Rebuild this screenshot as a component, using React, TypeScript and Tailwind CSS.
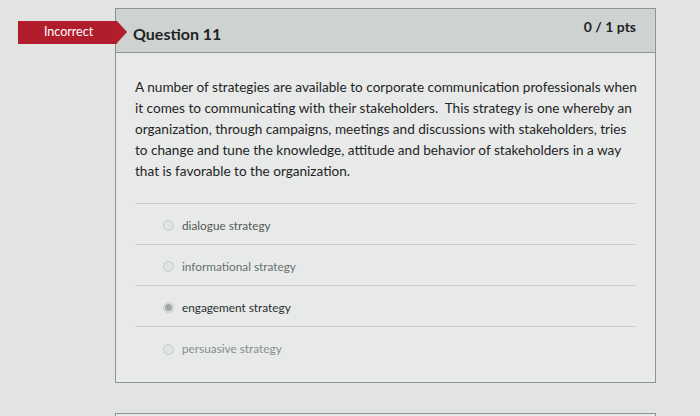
const options = [
  { label: 'dialogue strategy', color: 'text-[#535a59]', selected: false },
  { label: 'informational strategy', color: 'text-[#687070]', selected: false },
  { label: 'engagement strategy', color: 'text-[#2a3030]', selected: true },
  { label: 'persuasive strategy', color: 'text-[#878d8d]', selected: false },
];

const Radio = ({ selected }: { selected: boolean }) => (
  <div className="w-[11px] h-[11px] rounded-full border border-[#c6cac9] bg-[#e1e4e3] flex items-center justify-center shrink-0">
    {selected && <div className="w-[7px] h-[7px] rounded-full bg-[#a2a7a6]"></div>}
  </div>
);

export default function App() {
  return (
    <div
      className="relative w-[700px] h-[416px] overflow-hidden bg-[#e2e4e2] pt-[8px]"
      style={{ fontFamily: 'Lato, "Open Sans", sans-serif' }}
    >
      {/* incorrect badge */}
      <div className="absolute left-[18px] top-[21px] z-10 flex items-stretch h-[23px]">
        <div className="w-[99px] bg-[#b21d2b] flex items-center justify-center text-white text-[12.5px] pl-[2px]">
          Incorrect
        </div>
        <div className="w-0 h-0 border-y-[11.5px] border-y-transparent border-l-[10px] border-l-[#b21d2b]"></div>
      </div>

      <div className="ml-[115px] w-[541px] border border-[#8f9493] bg-[#e8eae9]">
        <div className="h-[44px] bg-[#ced2d1] border-b border-[#8f9493] flex justify-between pl-[17px] pr-[19px]">
          <div className="self-end pb-[6px] text-[16px] font-bold text-[#1f2424]">Question 11</div>
          <div className="self-start pt-[7px] text-[14px] font-bold text-[#1f2424]">0 / 1 pts</div>
        </div>

        <div className="pt-[24px] pb-[14px]">
          <p className="pl-[19px] pr-[8px] text-[13.6px] leading-[21px] text-[#1f2525] whitespace-nowrap">
            A number of strategies are available to corporate communication professionals when
            <br />
            it comes to communicating with their stakeholders.&nbsp; This strategy is one whereby an
            <br />
            organization, through campaigns, meetings and discussions with stakeholders, tries
            <br />
            to change and tune the knowledge, attitude and behavior of stakeholders in a way
            <br />
            that is favorable to the organization.
          </p>

          <div className="mt-[21px] mx-[19px] border-t border-[#cbcecd]">
            {options.map((o, i) => (
              <div
                key={o.label}
                className={`h-[41px] flex items-center gap-[8px] pl-[28px] pt-[3px] ${
                  i < options.length - 1 ? 'border-b border-[#cbcecd]' : ''
                }`}
              >
                <Radio selected={o.selected} />
                <span className={`text-[11.8px] ${o.color}`}>{o.label}</span>
              </div>
            ))}
          </div>
        </div>
      </div>

      {/* next question card peeking in */}
      <div className="ml-[115px] mt-[30px] w-[541px] h-[20px] border border-[#8f9493] bg-[#e8eae9]"></div>
    </div>
  );
}
